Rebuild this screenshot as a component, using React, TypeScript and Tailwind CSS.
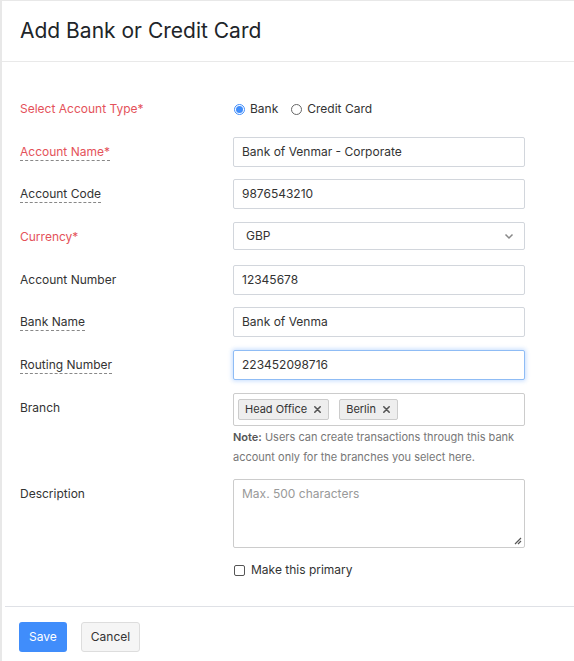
import { FC } from "react";

const font = { fontFamily: "Inter, 'Open Sans', sans-serif" };

type RowProps = {
	label: string;
	required?: boolean;
	dashed?: boolean;
	gap?: string;
	children: React.ReactNode;
};

const Row = ({ label, required, dashed, gap = "mb-[13px]", children }: RowProps) => (
	<div className={`flex items-start ${gap}`}>
		<div className="w-[213px] shrink-0 pt-[6px] text-[12px] leading-[18px]">
			<span
				className={`${required ? "text-[#e4525a]" : "text-[#333]"} ${
					dashed ? "border-b border-dashed border-[#888] pb-[1px]" : ""
				}`}
			>
				{label}
				{required && "*"}
			</span>
		</div>
		<div className="w-[292px]">{children}</div>
	</div>
);

const Field = ({ value, focus }: { value: string; focus?: boolean }) => (
	<div
		className={`h-[30px] flex items-center px-[8px] rounded-[2px] border text-[12px] text-[#333] bg-white ${
			focus ? "border-[#8fbcf5] shadow-[0_0_4px_1px_rgba(64,141,251,0.3)]" : "border-[#d2d6dc]"
		}`}
	>
		{value}
	</div>
);

const Tag = ({ text }: { text: string }) => (
	<span className="inline-flex items-center h-[21px] px-[6px] gap-[6px] bg-[#eeeeee] border border-[#cccccc] rounded-[2px] text-[11px] text-[#333]">
		{text}
		<svg width="9" height="9" viewBox="0 0 10 10">
			<path d="M2 2L8 8M8 2L2 8" stroke="#555" strokeWidth="1.8" strokeLinecap="round" />
		</svg>
	</span>
);

export const App: FC = () => {
	return (
		<div style={font} className="w-[574px] h-[661px] bg-white border-l-2 border-t border-[#e8e8e8] overflow-hidden">
			<div className="h-[61px] flex items-center px-[18px] border-b border-[#e9e9e9]">
				<h1 className="text-[21px] text-[#212529] font-normal">Add Bank or Credit Card</h1>
			</div>

			<div className="pl-[18px] pt-[38px]">
				<div className="flex items-center mb-[19px] text-[12px] leading-[18px]">
					<div className="w-[213px] shrink-0 text-[#e4525a]">Select Account Type*</div>
					<div className="flex items-center text-[#333]">
						<span className="w-[11px] h-[11px] rounded-full border border-[#408dfb] flex items-center justify-center mr-[5px] ml-[1px]">
							<span className="w-[7px] h-[7px] rounded-full bg-[#408dfb]" />
						</span>
						Bank
						<span className="w-[11px] h-[11px] rounded-full border border-[#666] ml-[13px] mr-[5px]" />
						Credit Card
					</div>
				</div>

				<Row label="Account Name" required dashed gap="mb-[12px]">
					<Field value="Bank of Venmar - Corporate" />
				</Row>
				<Row label="Account Code" dashed>
					<Field value="9876543210" />
				</Row>
				<Row label="Currency" required>
					<div className="h-[28px] mb-[2px] flex items-center justify-between pl-[12px] pr-[10px] rounded-[2px] border border-[#d2d6dc] text-[12px] text-[#333]">
						GBP
						<svg width="10" height="7" viewBox="0 0 10 7">
							<path d="M1.5 1.5L5 5L8.5 1.5" stroke="#888" strokeWidth="1.5" fill="none" />
						</svg>
					</div>
				</Row>
				<Row label="Account Number" gap="mb-[12px]">
					<Field value="12345678" />
				</Row>
				<Row label="Bank Name" dashed>
					<Field value="Bank of Venma" />
				</Row>
				<Row label="Routing Number" dashed>
					<Field value="223452098716" focus />
				</Row>
				<Row label="Branch" gap="mb-[12px]">
					<div className="h-[33px] flex items-center gap-[10px] px-[4px] border border-[#cccccc] rounded-[2px]">
						<Tag text="Head Office" />
						<Tag text="Berlin" />
					</div>
					<p className="text-[11px] leading-[20px] text-[#777] mt-[1px]">
						<b className="font-semibold text-[#555]">Note:</b> Users can create transactions through this bank
						account only for the branches you select here.
					</p>
				</Row>
				<Row label="Description" gap="mb-0">
					<div className="relative h-[69px] border border-[#cccccc] rounded-[2px] px-[8px] py-[5px] text-[12px] text-[#999]">
						Max. 500 characters
						<svg className="absolute right-[2px] bottom-[2px]" width="9" height="9" viewBox="0 0 9 9">
							<path d="M8 2L2 8M8 5L5 8" stroke="#555" strokeWidth="1.2" />
						</svg>
					</div>
					<label className="flex items-center mt-[13px] text-[12px] text-[#333]">
						<span className="w-[11px] h-[11px] border border-[#555] rounded-[2px] mr-[6px] ml-[1px]" />
						Make this primary
					</label>
				</Row>
			</div>

			<div className="mt-[27px] ml-[3px] border-t border-[#dfe1e6] pt-[15px] pl-[14px] flex gap-[14px]">
				<button className="h-[30px] px-[10px] bg-[#408dfb] text-white text-[12px] rounded-[3px]">Save</button>
				<button className="h-[30px] px-[9px] bg-[#f5f5f5] text-[#333] text-[12px] rounded-[3px] border border-[#dddddd]">
					Cancel
				</button>
			</div>
		</div>
	);
};

export default App;
